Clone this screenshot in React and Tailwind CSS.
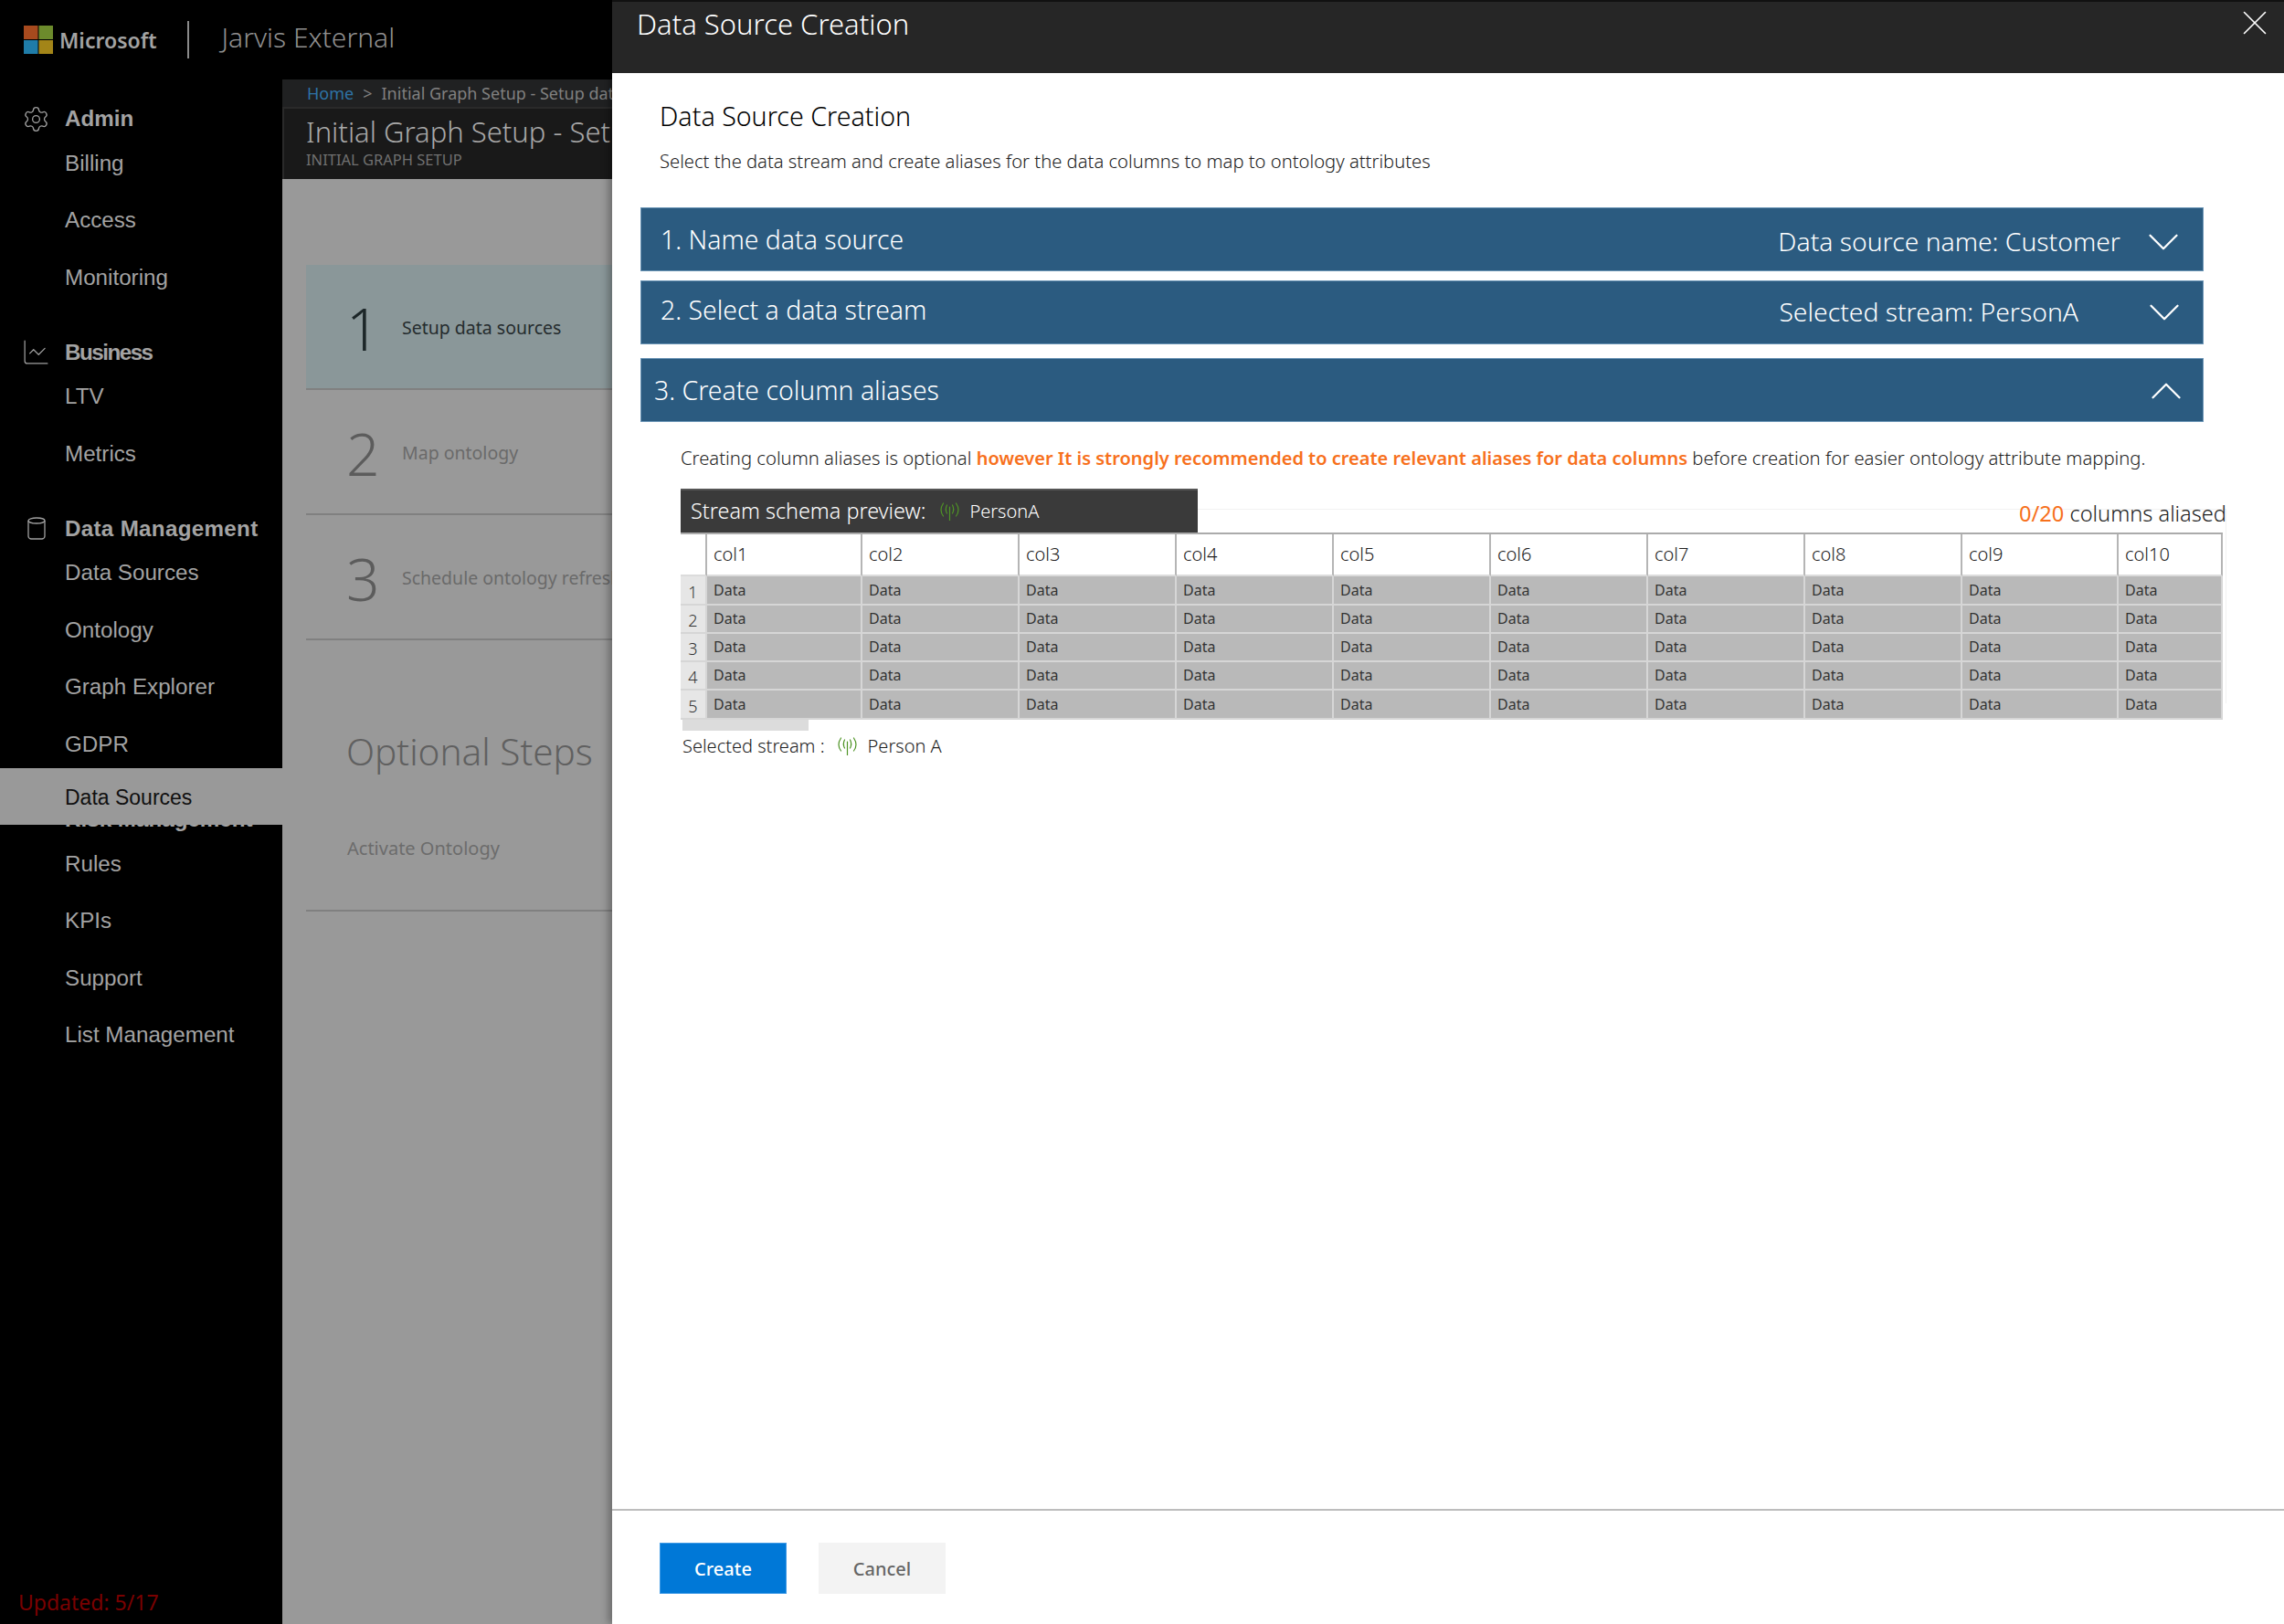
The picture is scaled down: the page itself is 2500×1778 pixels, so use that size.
import React from "react";
import { Settings, ChartLine, X, ChevronDown, ChevronUp } from "lucide-react";

const groups = [
  { title: "Admin", icon: "gear", items: ["Billing", "Access", "Monitoring"], cls: "" },
  { title: "Business", icon: "chart", items: ["LTV", "Metrics"], cls: "tracking-[-1.5px]" },
  { title: "Data Management", icon: "db", items: ["Data Sources", "Ontology", "Graph Explorer", "GDPR"], cls: "tracking-[0.3px]" },
  { title: "Risk Management", icon: null, items: ["Rules", "KPIs", "Support", "List Management"], cls: "" },
];

const cols = ["col1", "col2", "col3", "col4", "col5", "col6", "col7", "col8", "col9", "col10"];

function MsLogo() {
  return (
    <svg width="32" height="31" viewBox="0 0 32 31" className="shrink-0">
      <rect x="0" y="0" width="15.5" height="15" fill="#a74a1e" />
      <rect x="16.5" y="0" width="15.5" height="15" fill="#6c8b2c" />
      <rect x="0" y="16" width="15.5" height="15" fill="#1f7ca8" />
      <rect x="16.5" y="16" width="15.5" height="15" fill="#a38518" />
    </svg>
  );
}

function Cylinder() {
  return (
    <svg width="20" height="25" viewBox="0 0 20 25" fill="none" stroke="#a0a0a0" strokeWidth="1.3">
      <ellipse cx="10" cy="4" rx="9" ry="3" />
      <path d="M1 4v17c0 2 2 3 3 3h12c1 0 3-1 3-3V4" />
    </svg>
  );
}

function Antenna({ w = 21, h = 20 }) {
  return (
    <svg width={w} height={h} viewBox="0 0 21 20" fill="none" stroke="#4f9426" strokeWidth="1.2" strokeLinecap="round" className="shrink-0">
      <path d="M10.5 5v15" />
      <path d="M7.5 3c-1.6 3-1.6 6 0 9" />
      <path d="M13.5 3c1.6 3 1.6 6 0 9" />
      <path d="M3.5 1c-3 4.500-3 10 0 14" />
      <path d="M17.500 1c3 4.500 3 10 0 14" />
    </svg>
  );
}

function NavIcon({ kind }) {
  if (kind === "gear") return <Settings size={31} strokeWidth={1} color="#a0a0a0" />;
  if (kind === "chart") return <ChartLine size={33} strokeWidth={0.9} color="#a0a0a0" />;
  if (kind === "db") return <Cylinder />;
  return null;
}

function Sidebar() {
  return (
    <aside className="relative w-[309px] shrink-0 bg-black pt-[26px] font-['Liberation_Sans',sans-serif] text-[24.2px] text-[#a3a3a3]">
      <div className="flex flex-col gap-[33.5px]">
        {groups.map((g) => (
          <div key={g.title}>
            <div className="flex h-[34.4px] items-center font-bold">
              <span className="flex w-[71px] shrink-0 justify-center pl-[8px]"><NavIcon kind={g.icon} /></span>
              <span className={g.cls}>{g.title}</span>
            </div>
            {g.items.map((i) => (
              <div key={i} className="flex h-[62.6px] items-center pl-[71px]">{i}</div>
            ))}
          </div>
        ))}
      </div>
      <div className="absolute left-0 right-0 top-[754px] flex h-[62px] items-center bg-[#999999] pl-[71px] pt-[3px] text-[23px] text-[#101010]">
        Data Sources
      </div>
      <div className="absolute bottom-[7px] left-[20px] font-['Noto_Sans',sans-serif] text-[23px] text-[#7a0000]">Updated: 5/17</div>
    </aside>
  );
}

function Step({ n, label, active }) {
  return (
    <div className={`flex h-[137px] items-center border-b-2 border-[#808080] pl-[44px] ${active ? "bg-[#8a9799]" : ""}`}>
      <span className={`w-[61px] shrink-0 pt-[4px] text-[64px] font-light leading-none ${active ? "text-[#1c2628]" : "text-[#5c5c5c]"}`}>{n}</span>
      <span className={`whitespace-nowrap pt-[2px] text-[19.5px] ${active ? "text-[#252c2e]" : "text-[#6a6a6a]"}`}>{label}</span>
    </div>
  );
}

function Background() {
  return (
    <div className="flex min-w-0 flex-1 flex-col overflow-hidden bg-[#999999]">
      <div className="flex h-[32px] items-center whitespace-nowrap border-b-2 border-[#2a2a2a] bg-[#202122] pl-[27px] text-[18px] text-[#808080]">
        <span className="text-[#2e73a6]">Home</span>
        <span className="mx-[10px]">&gt;</span>
        <span>Initial Graph Setup - Setup data sources</span>
      </div>
      <div className="flex h-[77px] flex-col justify-center whitespace-nowrap border-l-2 border-[#2a2a2a] bg-[#191919] pb-[5px] pl-[24px]">
        <div className="text-[31px] font-light leading-[40px] text-[#a8a8a8]">Initial Graph Setup - Setup data sources</div>
        <div className="text-[16.5px] leading-[22px] text-[#707070]">INITIAL GRAPH SETUP</div>
      </div>
      <div className="flex flex-1 flex-col pl-[26px] pt-[94px]">
        <Step n="1" label="Setup data sources" active />
        <Step n="2" label="Map ontology" />
        <Step n="3" label="Schedule ontology refresh" />
        <div className="pl-[44px] pt-[92px] text-[40.5px] font-light leading-[60px] text-[#606060]">Optional Steps</div>
        <div className="flex h-[145px] items-start border-b-2 border-[#808080] pl-[45px] pt-[62px] text-[20px] leading-[28px] text-[#6c6c6c]">Activate Ontology</div>
      </div>
    </div>
  );
}

function Bar({ title, right, open, titleClass, rightClass, iconClass }) {
  const Icon = open ? ChevronUp : ChevronDown;
  return (
    <div className="flex h-[70px] items-center justify-between border border-[#6a94b5] bg-[#2b5b80] pr-[11px] text-white">
      <span className={`text-[28.4px] font-light ${titleClass}`}>{title}</span>
      <span className="flex items-center">
        {right && <span className={`text-[28.3px] font-light ${rightClass}`}>{right}</span>}
        <Icon size={58} strokeWidth={0.95} className={iconClass} />
      </span>
    </div>
  );
}

function Table() {
  return (
    <div className="grid w-[1688px] grid-cols-[29px_170px_172px_172px_172px_172px_172px_172px_172px_171px_114px] grid-rows-[46px_32px_31px_31px_31px_32px] border-t-2 border-[#ababab]">
      <div className="border-b-2 border-r-2 border-[#dcdcdc] border-r-[#b5b5b5]" />
      {cols.map((c) => (
        <div key={c} className="flex items-center border-b-2 border-r-2 border-b-[#dcdcdc] border-r-[#b5b5b5] pl-[7px] text-[20px] font-light text-[#222222]">{c}</div>
      ))}
      {[1, 2, 3, 4, 5].map((r) => (
        <React.Fragment key={r}>
          <div className="flex items-center justify-center border-b-2 border-r-2 border-[#d6d6d6] bg-[#e6e6e6] pt-[4px] text-[18px] font-light leading-none text-[#333333]">{r}</div>
          {cols.map((c) => (
            <div key={c} className="flex items-center border-b-2 border-r-2 border-[#d6d6d6] bg-[#b9b9b9] pl-[7px] text-[16px] text-[#333333]">Data</div>
          ))}
        </React.Fragment>
      ))}
    </div>
  );
}

function Drawer() {
  return (
    <section className="flex w-[1830px] shrink-0 flex-col bg-white shadow-[-4px_0_8px_rgba(0,0,0,0.3)]">
      <header className="flex h-[80px] shrink-0 justify-between border-t-2 border-[#111111] bg-[#262626] pl-[27px] pr-[9px] text-white">
        <h1 className="pt-[1px] text-[31px] font-light leading-[46px]">Data Source Creation</h1>
        <X size={46} strokeWidth={0.85} />
      </header>
      <div className="flex-1 pl-[31px]">
        <h2 className="pl-[21px] pt-[25px] text-[28.6px] font-light leading-[44px] text-black">Data Source Creation</h2>
        <p className="pl-[21px] pt-[13px] text-[20.2px] font-light leading-[28px] text-[#222222]">
          Select the data stream and create aliases for the data columns to map to ontology attributes
        </p>
        <div className="mt-[37px] flex w-[1711px] flex-col">
          <Bar title="1. Name data source" right="Data source name: Customer" titleClass="pl-[21px]" rightClass="mr-[18px] pt-[4px]" iconClass="mr-[3px] mt-[6px]" />
          <div className="mt-[10px]">
            <Bar title="2. Select a data stream" right="Selected stream: PersonA" titleClass="pb-[6px] pl-[21px]" rightClass="mr-[65px] pb-[2px]" iconClass="mr-[2px]" />
          </div>
          <div className="mt-[15px]">
            <Bar title="3. Create column aliases" open titleClass="pl-[14px]" iconClass="mt-[2px]" />
          </div>
        </div>
        <p className="whitespace-nowrap pl-[44px] pt-[24.5px] text-[20.25px] font-light leading-[28px] text-[#222222]">
          Creating column aliases is optional <span className="text-[20px] font-semibold text-[#f7701c]">however It is strongly recommended to create relevant aliases for data columns</span> before creation for easier ontology attribute mapping.
        </p>
        <div className="relative ml-[44px] mt-[19px] w-[1692px]">
          <div className="absolute left-[566px] right-0 top-[22px] h-[213px] border-r border-t border-[#f2f2f2]" />
          <div className="relative flex h-[48px] items-center justify-between">
            <div className="flex h-full w-[566px] items-center border-t-2 border-[#555555] bg-[#3a3a3a] pl-[11px] text-white">
              <span className="text-[23.4px] font-light">Stream schema preview:</span>
              <span className="ml-[16px] mr-[11px]"><Antenna /></span>
              <span className="text-[20px] font-light">PersonA</span>
            </div>
            <div className="pt-[8px] text-[23.6px] font-light text-[#222222]">
              <span className="font-normal text-[#f7701c]">0/20</span> columns aliased
            </div>
          </div>
          <div className="relative"><Table /></div>
          <div className="relative ml-[2px] h-[12px] w-[138px] bg-[#dcdcdc]" />
          <div className="relative ml-[2px] flex h-[34px] items-center text-[20px] font-light text-[#222222]">
            <span>Selected stream :</span>
            <span className="ml-[14px] mr-[12px]"><Antenna /></span>
            <span>Person A</span>
          </div>
        </div>
      </div>
      <footer className="flex h-[126px] shrink-0 items-start gap-[35px] border-t-2 border-[#bdbdbd] pl-[52px] pt-[35px]">
        <button className="h-[56px] w-[139px] border border-[#3f9ae6] bg-[#0078d7] pt-[2px] text-[20px] font-medium text-white">Create</button>
        <button className="h-[56px] w-[139px] bg-[#f3f3f3] pt-[2px] text-[20px] font-medium text-[#666666]">Cancel</button>
      </footer>
    </section>
  );
}

export default function App() {
  return (
    <div className="flex h-[1778px] w-[2500px] overflow-hidden bg-black font-['Noto_Sans',sans-serif]">
      <div className="flex w-[670px] shrink-0 flex-col">
        <div className="flex h-[87px] shrink-0 items-start bg-black pl-[26px] pt-[23px]">
          <div className="mt-[5px]"><MsLogo /></div>
          <span className="ml-[7px] mt-[3px] text-[23px] font-semibold leading-[36px] text-[#a3a3a3]">Microsoft</span>
          <span className="ml-[33px] h-[41px] w-[2px] bg-[#8a8a8a]" />
          <span className="ml-[36px] -mt-[2px] text-[30px] font-light leading-[40px] text-[#8f8f8f]">Jarvis External</span>
        </div>
        <div className="flex min-h-0 flex-1">
          <Sidebar />
          <Background />
        </div>
      </div>
      <Drawer />
    </div>
  );
}
